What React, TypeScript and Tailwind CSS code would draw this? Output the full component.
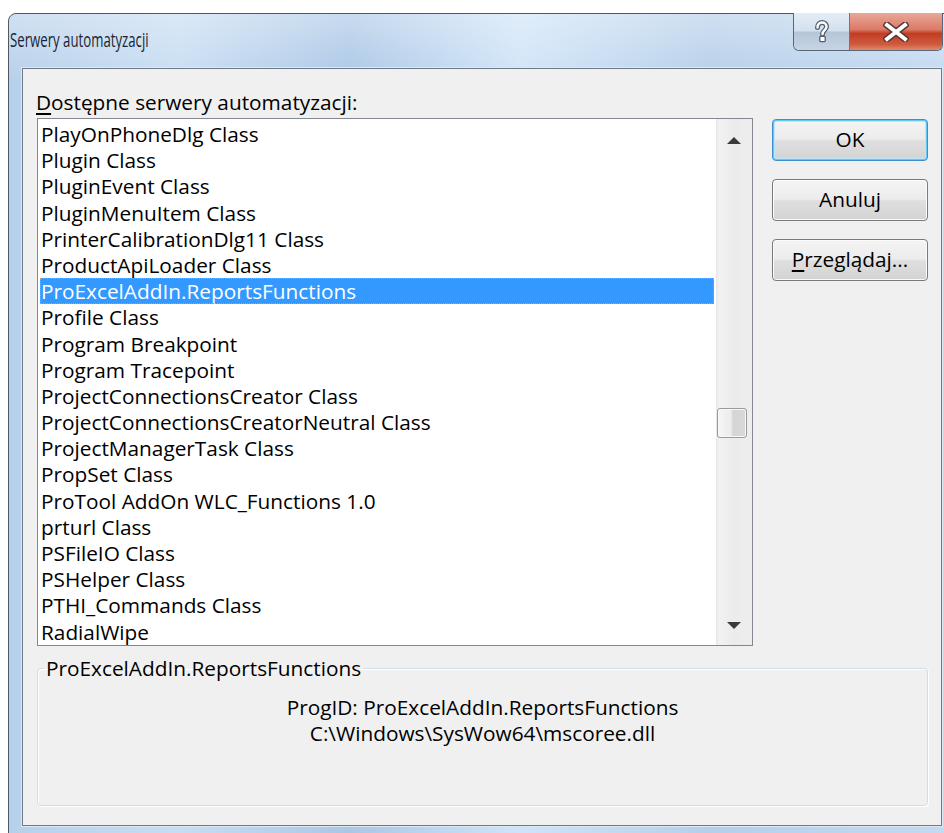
import React from "react"

const servers = [
  "PlayOnPhoneDlg Class",
  "Plugin Class",
  "PluginEvent Class",
  "PluginMenuItem Class",
  "PrinterCalibrationDlg11 Class",
  "ProductApiLoader Class",
  "ProExcelAddIn.ReportsFunctions",
  "Profile Class",
  "Program Breakpoint",
  "Program Tracepoint",
  "ProjectConnectionsCreator Class",
  "ProjectConnectionsCreatorNeutral Class",
  "ProjectManagerTask Class",
  "PropSet Class",
  "ProTool AddOn WLC_Functions 1.0",
  "prturl Class",
  "PSFileIO Class",
  "PSHelper Class",
  "PTHI_Commands Class",
  "RadialWipe",
]

const selected = "ProExcelAddIn.ReportsFunctions"

function HelpGlyph() {
  return (
    <svg width="18" height="24" viewBox="0 0 18 24">
      <path
        d="M4.5 7.5 C4.5 4 6.8 2.5 9 2.5 C11.6 2.5 13.5 4 13.5 6.8 C13.5 10 9.5 10.5 9.5 14"
        fill="none"
        stroke="#56606c"
        strokeWidth="5"
        strokeLinecap="round"
      />
      <path
        d="M4.5 7.5 C4.5 4 6.8 2.5 9 2.5 C11.6 2.5 13.5 4 13.5 6.8 C13.5 10 9.5 10.5 9.5 14"
        fill="none"
        stroke="#ffffff"
        strokeWidth="2.4"
        strokeLinecap="round"
      />
      <rect x="6.8" y="16.3" width="5.4" height="5.4" rx="1" fill="#ffffff" stroke="#56606c" strokeWidth="1.3" />
    </svg>
  )
}

function CloseGlyph() {
  return (
    <svg width="26" height="20" viewBox="0 0 26 20">
      <path d="M4 3 L22 17 M22 3 L4 17" stroke="#5a3a36" strokeWidth="7" strokeLinecap="square" />
      <path d="M4 3 L22 17 M22 3 L4 17" stroke="#ffffff" strokeWidth="4" strokeLinecap="square" />
    </svg>
  )
}

function Arrow({ down }: { down?: boolean }) {
  return (
    <svg width="14" height="7" viewBox="0 0 14 7">
      <polygon points={down ? "0,0 14,0 7,7" : "7,0 14,7 0,7"} fill="#3a3a3a" />
    </svg>
  )
}

function Button({ label, primary }: { label: React.ReactNode; primary?: boolean }) {
  return (
    <button
      className={
        "w-[156px] h-[42px] rounded-[4px] border text-[20.8px] text-black bg-[linear-gradient(to_bottom,#f4f4f4_0%,#ececec_48%,#dfdfdf_52%,#d3d3d3_100%)] " +
        (primary
          ? "border-[#3c8fcc] shadow-[inset_0_0_0_1px_#62c8f4,inset_0_0_0_2px_#bfe6f8]"
          : "border-[#7a7a7a] shadow-[inset_0_0_0_1px_#fbfbfb]")
      }
    >
      {label}
    </button>
  )
}

export default function App() {
  return (
    <div className="w-[944px] h-[833px] bg-white overflow-hidden pt-[13px] pl-[8px] font-['Open_Sans',sans-serif]">
      {/* window frame */}
      <div className="relative w-[948px] h-[840px] rounded-t-[8px] border border-[#4e5866] bg-[linear-gradient(90deg,#b7d0ea_0%,#c8ddf3_18%,#abc7e6_36%,#d0e4f8_54%,#b6cfe9_74%,#c4daf1_100%)]">
        <div className="absolute inset-0 rounded-t-[8px] bg-[linear-gradient(to_bottom,rgba(255,255,255,0.35)_0%,rgba(255,255,255,0)_8%)]" />

        {/* title bar */}
        <div className="relative h-[54px] pl-[1px] pt-[13px]">
          <div className="text-[20px] leading-[26px] text-[#1a2434] scale-x-[0.66] origin-left whitespace-nowrap">
            Serwery automatyzacji
          </div>
        </div>

        {/* caption buttons */}
        <div className="absolute left-[784px] top-[-1px] flex h-[38px] rounded-b-[6px] border border-t-0 border-[#5b6573] overflow-hidden">
          <div className="w-[56px] flex items-center justify-center bg-[linear-gradient(to_bottom,#e4edf6_0%,#d3e0ee_48%,#b5c6d9_52%,#c6d5e5_100%)] border-r border-[#6c7685]">
            <HelpGlyph />
          </div>
          <div className="w-[92px] flex items-center justify-center bg-[linear-gradient(to_bottom,#e9a898_0%,#d97a66_45%,#c23c22_55%,#cf5b3f_85%,#de8a6e_100%)]">
            <CloseGlyph />
          </div>
        </div>

        {/* client area */}
        <div className="relative ml-[13px] w-[920px] h-[758px] border border-[#6f7a87] bg-[#f0f0f0] shadow-[0_0_0_1px_#dbe9f7] text-[20.8px] text-black">
          <div className="flex pl-[14px] pt-[20px]">
            <div className="w-[716px]">
              <div className="h-[26px] leading-[26px] mb-[3px] -ml-[1px]">
                <span className="underline underline-offset-[3px]">D</span>ostępne serwery automatyzacji:
              </div>

              {/* list box */}
              <div className="flex h-[528px] border border-[#828790] bg-white">
                <div className="w-[678px] overflow-hidden pt-[2px] px-[2px]">
                  {servers.map((name) => (
                    <div
                      key={name}
                      className={
                        "h-[26.2px] pt-[1px] leading-[25px] pl-[1px] whitespace-nowrap " +
                        (name === selected ? "bg-[#3399ff] text-white outline outline-1 outline-dotted outline-[#d59a54] -outline-offset-1" : "")
                      }
                    >
                      {name}
                    </div>
                  ))}
                </div>

                {/* vertical scroll bar */}
                <div className="flex-1 flex flex-col bg-[linear-gradient(90deg,#e6e6e6_0%,#f2f2f2_8%,#ebebeb_50%,#eeeeee_100%)]">
                  <div className="h-[42px] flex items-center justify-center">
                    <Arrow />
                  </div>
                  <div className="flex-1">
                    <div className="mt-[247px] ml-[1px] w-[30px] h-[30px] rounded-[3px] border border-[#9a9a9a] shadow-[inset_0_0_0_1px_#f8f8f8] bg-[linear-gradient(90deg,#f6f6f6_0%,#ececec_45%,#d4d4d4_55%,#d9d9d9_100%)]" />
                  </div>
                  <div className="h-[40px] flex items-center justify-center">
                    <Arrow down />
                  </div>
                </div>
              </div>
            </div>

            <div className="flex flex-col gap-[18px] ml-[19px] pt-[30px]">
              <Button label="OK" primary />
              <Button label="Anuluj" />
              <Button
                label={
                  <>
                    <span className="underline underline-offset-[3px]">P</span>rzeglądaj...
                  </>
                }
              />
            </div>
          </div>

          {/* details group */}
          <fieldset className="ml-[14px] mt-[9px] w-[891px] h-[151px] rounded-[4px] border border-[#d3dde5] shadow-[inset_1px_1px_0_#ffffff,1px_1px_0_#ffffff]">
            <legend className="ml-[6px] px-[2px] leading-[26px]">{selected}</legend>
            <div className="pt-[13px] text-center leading-[26px]">
              <div>ProgID: ProExcelAddIn.ReportsFunctions</div>
              <div>{"C:\\Windows\\SysWow64\\mscoree.dll"}</div>
            </div>
          </fieldset>
        </div>
      </div>
    </div>
  )
}
